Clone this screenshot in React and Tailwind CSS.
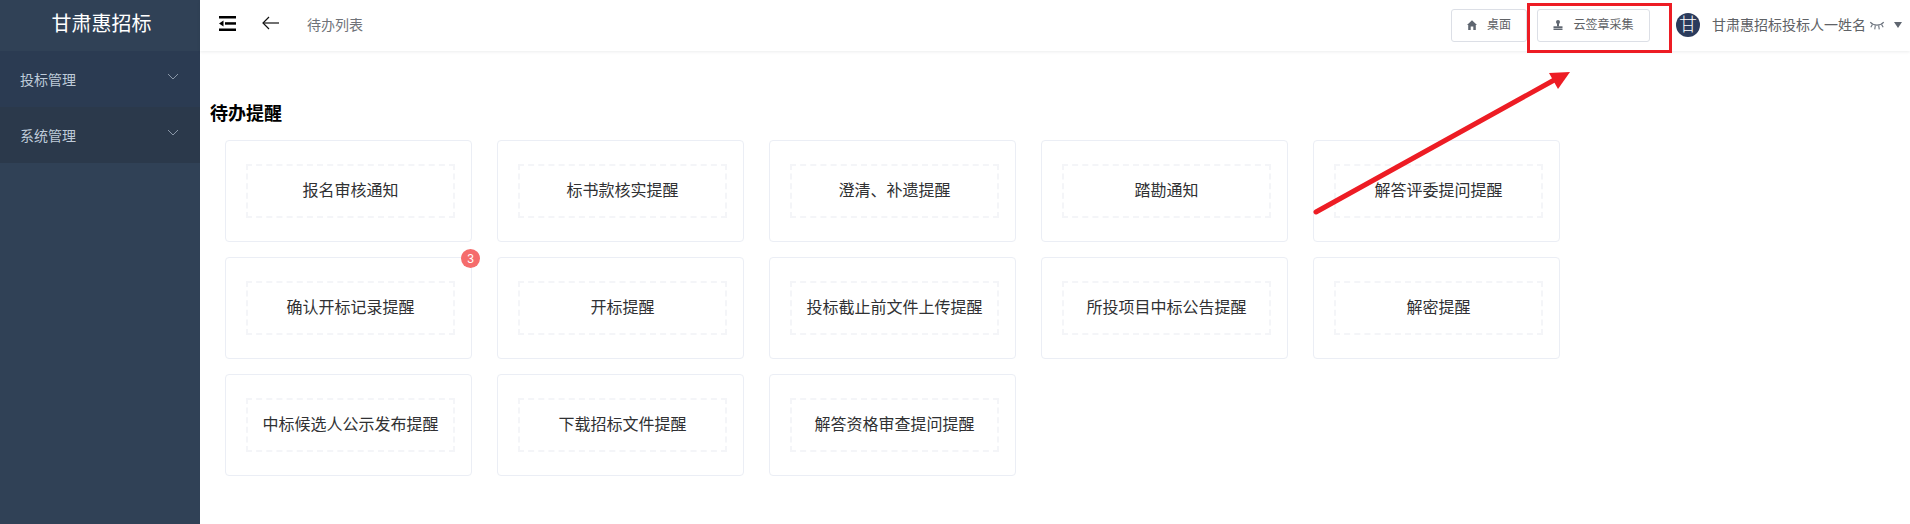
import React from 'react'

const CARDS = [
  { title: '报名审核通知' },
  { title: '标书款核实提醒' },
  { title: '澄清、补遗提醒' },
  { title: '踏勘通知' },
  { title: '解答评委提问提醒' },
  { title: '确认开标记录提醒', badge: 3 },
  { title: '开标提醒' },
  { title: '投标截止前文件上传提醒' },
  { title: '所投项目中标公告提醒' },
  { title: '解密提醒' },
  { title: '中标候选人公示发布提醒' },
  { title: '下载招标文件提醒' },
  { title: '解答资格审查提问提醒' },
]

function Chevron() {
  return (
    <svg className="w-[12px] h-[7px]" viewBox="0 0 12 7" fill="none">
      <polyline points="1 1 6 6 11 1" stroke="#8a97a8" strokeWidth="1" />
    </svg>
  )
}

function MenuItem({ label, dark }) {
  return (
    <div className={`h-14 flex items-center justify-between pl-5 pr-[21px] text-sm text-[#bfcbd9] ${dark ? 'bg-[#2b394b]' : 'bg-[#2b3b52]'}`}>
      <span className="mt-[2px]">{label}</span>
      <span className="mb-[6px]"><Chevron /></span>
    </div>
  )
}

function Sidebar() {
  return (
    <aside className="w-[200px] shrink-0 bg-[#304156]">
      <div className="h-[51px] flex items-center justify-center text-[20px] leading-none text-white pb-[3px] pl-[3px]">甘肃惠招标</div>
      <MenuItem label="投标管理" />
      <MenuItem label="系统管理" dark />
    </aside>
  )
}

function CollapseIcon() {
  return (
    <svg className="w-[17px] h-[15px]" viewBox="0 0 17 15" fill="#000">
      <rect x="0" y="0" width="17" height="2.5" />
      <rect x="0" y="12.5" width="17" height="2.5" />
      <rect x="6" y="6.2" width="11" height="2.5" />
      <polygon points="0 7.5 4.5 4.5 4.5 10.5" />
    </svg>
  )
}

function BackIcon() {
  return (
    <svg className="w-[17px] h-[14px]" viewBox="0 0 17 14" fill="none" stroke="#111" strokeWidth="1.2">
      <polyline points="7 1 1 7 7 13" />
      <line x1="1" y1="7" x2="17" y2="7" />
    </svg>
  )
}

function HomeIcon() {
  return (
    <svg className="w-[10px] h-[10px]" viewBox="0 0 10 10" fill="#5f6670">
      <path d="M5 0.3 L10 5 L8.8 5 L8.8 10 L6.3 10 L6.3 6.5 L3.7 6.5 L3.7 10 L1.2 10 L1.2 5 L0 5 Z" />
    </svg>
  )
}

function StampIcon() {
  return (
    <svg className="w-[10px] h-[10px]" viewBox="0 0 10 10" fill="#5f6670">
      <circle cx="5" cy="2" r="2" />
      <rect x="4" y="3" width="2" height="3.5" />
      <rect x="0.5" y="6.3" width="9" height="2.2" />
      <rect x="0.5" y="9" width="9" height="1" />
    </svg>
  )
}

function EyeClosedIcon() {
  return (
    <svg className="w-[16px] h-[9px]" viewBox="0 0 14 8" fill="none" stroke="#6f7680" strokeWidth="1">
      <path d="M1 1 C4 4.5 10 4.5 13 1" />
      <path d="M3 3 L1.5 5.5 M5.5 4 L5 7.5 M8.5 4 L9 7.5 M11 3 L12.5 5.5" />
    </svg>
  )
}

function HeaderButton({ icon, label, className }) {
  return (
    <button className={`h-[33px] flex items-center justify-center gap-[10px] bg-white border border-[#dcdfe6] rounded-[3px] text-xs text-[#606266] ${className}`}>
      {icon}
      {label}
    </button>
  )
}

function Header() {
  return (
    <header className="h-[51px] flex items-center bg-white shadow-[0_1px_3px_rgba(0,21,41,0.08)]">
      <div className="ml-[19px] mb-[4px]"><CollapseIcon /></div>
      <div className="ml-[26px] mb-[5px]"><BackIcon /></div>
      <div className="ml-[28px] mb-[2px] text-sm text-[#6f7379]">待办列表</div>
      <div className="ml-auto flex items-center pr-[8px] mb-[1px]">
        <HeaderButton icon={<HomeIcon />} label="桌面" className="w-[76px]" />
        <HeaderButton icon={<StampIcon />} label="云签章采集" className="w-[113px] ml-[10px]" />
        <div className="ml-[26px] w-6 h-6 rounded-full bg-[#2b3b5c] text-white text-[18px] font-light leading-none flex items-center justify-center">甘</div>
        <span className="ml-[12px] text-sm text-[#606266]">甘肃惠招标投标人一姓名</span>
        <span className="ml-[3px]"><EyeClosedIcon /></span>
        <span className="ml-[9px] w-0 h-0 border-x-[4.5px] border-x-transparent border-t-[6px] border-t-[#5f6670]" />
      </div>
    </header>
  )
}

function Card({ title, badge }) {
  return (
    <div className="relative h-[102px] pl-[20px] pr-[16px] py-[23px] bg-white border border-[#ebeef5] rounded-[4px]">
      <div className="h-[54px] flex items-center justify-center border-2 border-dashed border-[#f4f5f8] text-base text-[#303133]">
        {title}
      </div>
      {badge && (
        <span className="absolute -top-[9px] -right-[9px] w-[19px] h-[19px] rounded-full bg-[#f56c6c] text-white text-xs flex items-center justify-center">{badge}</span>
      )}
    </div>
  )
}

export default function App() {
  return (
    <div className="relative h-screen flex overflow-hidden bg-white font-['Liberation_Sans','Noto_Sans_CJK_SC',sans-serif]">
      <Sidebar />
      <main className="flex-1 min-w-0">
        <Header />
        <div className="pt-[51px] pl-[10px]">
          <h2 className="text-lg leading-[24px] font-bold text-black">待办提醒</h2>
          <div className="mt-[14px] ml-[15px] grid grid-cols-[repeat(5,247px)] gap-x-[25px] gap-y-[15px]">
            {CARDS.map((card) => (
              <Card key={card.title} title={card.title} badge={card.badge} />
            ))}
          </div>
        </div>
      </main>

      {/* red annotation laid over the page */}
      <div className="absolute left-[1527px] top-[3px] w-[145px] h-[50px] border-[3px] border-[#ed1c24]" />
      <svg className="absolute left-0 top-0 pointer-events-none" width="1910" height="524" fill="none">
        <line x1="1316" y1="212" x2="1556" y2="79" stroke="#ed1c24" strokeWidth="5" strokeLinecap="round" />
        <polygon points="1570,72 1549,73 1558,89" fill="#ed1c24" />
      </svg>
    </div>
  )
}
